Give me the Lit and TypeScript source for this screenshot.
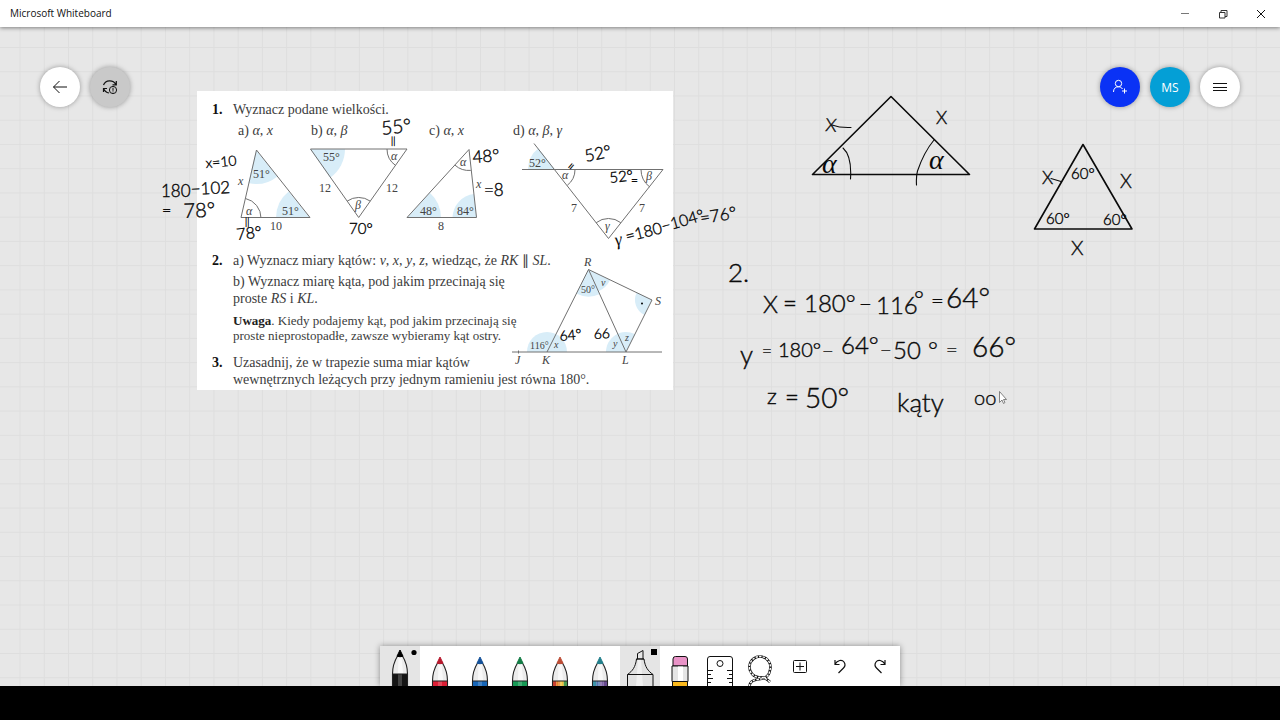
import { LitElement, html, svg, css } from "lit";
import { customElement, property } from "lit/decorators.js";

/** Path of a pie slice (or of its arc alone); angles in degrees, clockwise from +x. */
function slice(cx: number, cy: number, r: number, from: number, to: number, arcOnly = false): string {
  const p = (a: number) => {
    const t = (a * Math.PI) / 180;
    return `${(cx + r * Math.cos(t)).toFixed(1)} ${(cy + r * Math.sin(t)).toFixed(1)}`;
  };
  const arc = `A${r} ${r} 0 0 1 ${p(to)}`;
  return arcOnly ? `M${p(from)}${arc}` : `M${cx} ${cy}L${p(from)}${arc}Z`;
}

type Label = [x: number, y: number, text: string, italic?: boolean];

const figureOneLabels: Label[] = [
  [238, 185, "x", true], [253, 178, "51°"], [246, 215, "α", true], [282, 215, "51°"], [270, 230, "10"],
  [323, 161, "55°"], [391, 160, "α", true], [319, 192, "12"], [386, 192, "12"], [355, 209, "β", true],
  [460, 166, "α", true], [420, 215, "48°"], [457, 215, "84°"], [438, 230, "8"], [476, 188, "x", true],
  [529, 167, "52°"], [562, 179, "α", true], [646, 180, "β", true], [571, 212, "7"], [639, 212, "7"], [605, 230, "γ", true],
];

const figureTwoLabels: Label[] = [
  [584, 266, "R", true], [655, 305, "S", true], [515, 364, "J", true], [542, 364, "K", true], [622, 364, "L", true],
];
const figureTwoAngles: Label[] = [
  [530, 349, "116°"], [554, 348, "x", true], [613, 347, "y", true], [625, 341, "z", true], [581, 293, "50°"], [601, 286, "v", true],
];

const labels = (list: Label[]) =>
  list.map(([x, y, text, italic]) => svg`<text class=${italic ? "math" : "num"} x=${x} y=${y}>${text}</text>`);

@customElement("wb-worksheet")
export class Worksheet extends LitElement {
  static styles = css`
    :host { display: block; box-sizing: border-box; width: 476px; padding: 10px 0 2px; background: #fff; color: #3c3c3c;
      font: 14px/18px "Liberation Serif", serif; white-space: nowrap; }
    ol, p { margin: 0; padding: 0; }
    ol { list-style: none; }
    .task { display: grid; grid-template-columns: 21px 1fr; padding-left: 15px; }
    .no { grid-column: 1; font-weight: bold; color: #111; }
    .parts { display: grid; grid-template-columns: 73px 118px 84px 1fr; padding: 3px 0 0 5px; }
    .first svg { grid-column: 1 / -1; margin-left: -15px; }
    .second { margin-top: 6px; }
    .second > * { grid-row: 1; }
    .second svg { grid-column: 1 / -1; justify-self: end; }
    .text { grid-column: 2; }
    .para { margin-top: 3px; line-height: 17px; }
    .note { margin-top: 6px; font-size: 13px; line-height: 15px; }
    .note b { color: #222; }
    .third { margin-top: 11px; line-height: 17px; }
    svg { display: block; overflow: visible; font-family: "Liberation Serif", serif; font-size: 12px; }
    text { fill: #444; }
    .math { font-style: italic; }
    .small { font-size: 10px; }
    .fill { fill: #d8edf8; stroke: none; }
    .line { fill: none; stroke: #707070; stroke-width: 1; }
  `;

  render() {
    return html`
      <ol>
        <li class="task first">
          <span class="no">1.</span>
          <div>
            <p>Wyznacz podane wielkości.</p>
            <div class="parts">
              <span>a) <i>α</i>, <i>x</i></span><span>b) <i>α</i>, <i>β</i></span>
              <span>c) <i>α</i>, <i>x</i></span><span>d) <i>α</i>, <i>β</i>, <i>γ</i></span>
            </div>
          </div>
          <svg width="476" height="106" viewBox="197 140 476 106" role="img" aria-label="Trójkąty a, b, c, d">
            <path class="fill" d=${slice(256, 150, 34, 51, 103)} />
            <path class="fill" d=${slice(310, 218, 34, 180, 231)} />
            <path class="fill" d=${slice(310, 149, 35, 0, 55)} />
            <path class="fill" d=${slice(407, 218, 34, 312, 360)} />
            <path class="fill" d=${slice(476.5, 218, 24, 180, 264)} />
            <path class="fill" d=${slice(555, 169.5, 27, 180, 232)} />
            <path class="line" d="M256.5 150L241 217.5H310ZM310.500 149H407L358.700 217.500ZM469 149.500L407 217.500H476.500ZM534 143.500L608.500 238.500L663 169.500H522" />
            <path class="line" d=${slice(241, 218, 20, 283, 360, true)} />
            <path class="line" d=${slice(407, 149, 20, 125, 180, true)} />
            <path class="line" d=${slice(358.7, 217.5, 20, 235, 305, true)} />
            <path class="line" d=${slice(469, 149.5, 21, 85, 132, true)} />
            <path class="line" d=${slice(555, 169.5, 20, 0, 52, true)} />
            <path class="line" d=${slice(663, 169.5, 22, 128, 180, true)} />
            <path class="line" d=${slice(608.5, 238.5, 20, 232, 308, true)} />
            ${labels(figureOneLabels)}
          </svg>
        </li>
        <li class="task second">
          <span class="no">2.</span>
          <div class="text">
            <p>a) Wyznacz miary kątów: <i>v</i>, <i>x</i>, <i>y</i>, <i>z</i>, wiedząc, że <i>RK</i> ∥ <i>SL</i>.</p>
            <p class="para">b) Wyznacz miarę kąta, pod jakim przecinają się<br />proste <i>RS</i> i <i>KL</i>.</p>
            <p class="note"><b>Uwaga</b>. Kiedy podajemy kąt, pod jakim przecinają się<br />proste nieprostopadłe, zawsze wybieramy kąt ostry.</p>
          </div>
          <svg width="166" height="91" viewBox="507 252 166 91" role="img" aria-label="Czworokąt KLSR">
            <path class="fill" d=${slice(547, 352, 20, 180, 360)} />
            <path class="fill" d=${slice(626, 352, 20, 180, 297)} />
            <path class="fill" d=${slice(588.5, 269.5, 27, 65, 117)} />
            <path class="fill" d=${slice(588.5, 269.5, 24, 26, 65)} />
            <path class="fill" d=${slice(652, 300, 17, 117, 206)} />
            <path class="line" d="M512 352H662M547 352L588.500 269.500L652 300L626 352L588.500 269.500M518.500 350.500V353.500" />
            <circle cx="642" cy="303.500" r="1" />
            ${labels(figureTwoLabels)}
            <g class="small">${labels(figureTwoAngles)}</g>
          </svg>
        </li>
        <li class="task third">
          <span class="no">3.</span>
          <p>Uzasadnij, że w trapezie suma miar kątów<br />wewnętrznych leżących przy jednym ramieniu jest równa 180°.</p>
        </li>
      </ol>
    `;
  }
}

type Note = [x: number, y: number, size: number, text: string, turn?: number];

/** Handwritten notes: baseline start, size, text, rotation in degrees. */
const notes: Note[] = [
  [206, 168, 14, "x=10", -5], [161, 197, 17, "180"], [191, 195, 17, "−102", -3], [162, 216, 16, "="], [184, 218, 20, "78°", -3],
  [245, 225, 9, "||"], [237, 240, 16, "78°", -6], [382, 135, 19, "55°", -6], [391, 144, 9, "||"],
  [349, 234, 15, "70°"], [473, 163, 17, "48°", -4], [484, 196, 17, "=8"],
  [572, 172, 13, "=", -50], [586, 162, 17, "52°", -12], [610, 183, 15, "52°", -6], [631, 185, 12, "="],
  [616, 246, 18, "γ", -12], [627, 242, 16, "=180", -14], [663, 232, 16, "−104°", -16], [701, 224, 17, "=76°", -9],
  [560, 341, 14, "64°", -6], [594, 339, 14, "66", -3],
  [728, 282, 26, "2."],
  [763, 313, 24, "X"], [783, 312, 24, "="], [804, 312, 24, "180°"], [859, 312, 22, "−"], [876, 314, 24, "116"],
  [914, 308, 24, "°"], [931, 308, 22, "="], [946, 308, 28, "64°"],
  [740, 364, 26, "y"], [762, 357, 17, "="], [778, 357, 20, "180°"], [822, 358, 20, "−"], [841, 354, 24, "64°"],
  [880, 357, 20, "−"], [893, 359, 24, "50"], [928, 359, 24, "°"], [946, 357, 20, "="], [972, 357, 28, "66°"],
  [767, 404, 22, "z"], [785, 406, 24, "="], [805, 408, 28, "50°"], [897, 412, 26, "kąty"], [974, 405, 20, "oo"],
  [822, 173, 28, "α"], [929, 169, 28, "α"], [825, 131, 18, "X", 4], [936, 124, 18, "X"],
  [1042, 184, 18, "X"], [1120, 188, 19, "X"], [1071, 255, 20, "X"],
  [1071, 179, 15, "60°"], [1046, 224, 15, "60°"], [1103, 225, 15, "60°"],
];

@customElement("wb-ink")
export class Ink extends LitElement {
  static styles = css`
    :host { display: block; pointer-events: none; }
    svg { display: block; width: 100%; height: 100%; font-family: Lato, sans-serif; font-weight: 300; }
    .note { fill: #0a0a0a; stroke: #0a0a0a; stroke-width: 0.4; }
    .greek { font-family: "Liberation Serif", serif; font-style: italic; font-weight: 400; stroke: none; }
    .stroke { fill: none; stroke: #0a0a0a; stroke-width: 1.6; stroke-linecap: round; stroke-linejoin: round; }
    .thin { stroke-width: 1.1; }
    .cursor { fill: #fff; stroke: #666; stroke-width: 0.8; }
  `;

  render() {
    return html`
      <svg aria-label="Notatki odręczne">
        <g transform="translate(0 -27)">
          ${notes.map(([x, y, size, text, turn = 0]) =>
            svg`<text class=${/[αγ]/.test(text) ? "note greek" : "note"} font-size=${size} transform="translate(${x} ${y}) rotate(${turn})">${text}</text>`)}
          <path class="stroke" d="M891 96.500L812.500 174.500H969.500ZM1083 144.500L1034.500 229H1132Z" />
          <path class="stroke thin" d="M843 148Q852 156 850.500 179M934 140Q924 152 917.500 171Q916 176 916.500 185M832 125Q840 128 851 127.500M1051 178.500L1061 181.500" />
          <path class="cursor" d="M999.500 391.500V402.500L1002 400L1003.500 403.500L1005 402.500L1003.500 399.500H1006.500Z" />
        </g>
      </svg>
    `;
  }
}

@customElement("wb-pen")
export class Pen extends LitElement {
  @property() tip = "#000";
  @property({ attribute: false }) bands: string[] = [];
  @property({ type: Boolean }) raised = false;

  static styles = css`
    :host { display: block; }
    svg { display: block; }
    .body { fill: #ececec; stroke: #222; stroke-width: 1.1; }
    .shine { fill: #fff; opacity: 0.7; }
    .edge { fill: none; stroke: #222; stroke-width: 1; }
    .gloss { fill: #fff; opacity: 0.2; }
  `;

  render() {
    const w = 15 / this.bands.length;
    return html`
      <svg width="40" height="40" viewBox="0 0 40 40" aria-hidden="true">
        <g transform="translate(0 ${this.raised ? 0 : 7})">
          <path class="body" d="M17.500 10C14.500 15 12.500 21 12.500 28V40H27.500V28C27.500 21 25.500 15 22.500 10Z" />
          <path class="shine" d="M18.500 11H21.500L23 27H18Z" />
          ${this.bands.map((c, i) => svg`<rect x=${12.5 + i * w} y="28" width=${w} height="14" fill=${c} />`)}
          <rect class="gloss" x="18" y="28" width="4" height="14" />
          <path class="edge" d="M12.500 40V28H27.500V40" />
          <path d="M20 4L17 10.200Q20 11.300 23 10.200Z" fill=${this.tip} stroke=${this.tip} stroke-width="1" />
          ${this.raised ? svg`<circle cx="34" cy="6.500" r="2.600" />` : null}
        </g>
      </svg>
    `;
  }
}

const pens = [
  { name: "Czarne pióro", tip: "#000", bands: ["#151515"], raised: true },
  { name: "Czerwone pióro", tip: "#b81a2e", bands: ["#dc1f35"], raised: false },
  { name: "Niebieskie pióro", tip: "#15529a", bands: ["#1766b8"], raised: false },
  { name: "Zielone pióro", tip: "#147d46", bands: ["#179a55"], raised: false },
  { name: "Pióro tęczowe", tip: "#bd4d36", bands: ["#c9402f", "#e8862b", "#f0c23c", "#4a9a50"], raised: false },
  { name: "Pióro galaktyka", tip: "#23808c", bands: ["#3b93a8", "#5577b0", "#8065a8", "#6a4b90"], raised: false },
];

@customElement("app-root")
export class AppRoot extends LitElement {
  static styles = css`
    :host { display: flex; flex-direction: column; height: 100vh; overflow: hidden; color: #111; font-family: "Open Sans", sans-serif; }
    button { display: grid; place-items: center; margin: 0; padding: 0; border: 0; background: none; color: inherit; font: inherit; }
    svg { display: block; }
    .icon { fill: none; stroke: currentColor; stroke-width: 1; }
    .titlebar { position: relative; z-index: 2; display: flex; justify-content: space-between; height: 27px; padding-left: 10px;
      background: #fff; box-shadow: 0 1px 4px rgba(0, 0, 0, 0.45); }
    .title { margin: 0; font-size: 10px; font-weight: 400; line-height: 27px; }
    .window { display: flex; }
    .window button { width: 38px; }
    .board { position: relative; display: flex; flex: 1; flex-direction: column; justify-content: space-between; background: #e7e7e7; }
    .grid { position: absolute; inset: 0; width: 100%; height: 100%; }
    .sheet { position: absolute; top: 64px; left: 197px; }
    .ink { position: absolute; inset: 0; }
    .actions { position: relative; display: flex; justify-content: space-between; padding: 40px 40px 0; }
    .group { display: flex; gap: 10px; }
    .round { width: 40px; height: 40px; border-radius: 50%; background: #fff; box-shadow: 0 0 5px rgba(0, 0, 0, 0.35); font-size: 12px; }
    .sync { background: #c9c9c9; }
    .invite { background: #0a32f5; color: #fff; }
    .user { background: #049fd6; color: #fff; }
    .tools { position: relative; display: flex; align-self: center; background: #fff; box-shadow: 0 0 6px rgba(0, 0, 0, 0.4); }
    .tools button { width: 40px; height: 40px; }
    .tools .on { background: #e5e5e5; }
    .bottom { position: relative; z-index: 2; height: 34px; background: #000; }
  `;

  render() {
    return html`
      <header class="titlebar">
        <h1 class="title">Microsoft Whiteboard</h1>
        <div class="window">
          <button aria-label="Minimalizuj"><svg class="icon" width="10" height="10"><path d="M1 4.500H9" stroke="#777" /></svg></button>
          <button aria-label="Przywróć"><svg class="icon" width="10" height="10"><path stroke="#333" d="M1.500 3.500H7V9H1.500ZM3 3.500V1.500H9V7.500H7" /></svg></button>
          <button aria-label="Zamknij"><svg class="icon" width="10" height="10"><path d="M1 1L9 9M9 1L1 9" /></svg></button>
        </div>
      </header>
      <main class="board">
        <svg class="grid" aria-hidden="true">
          <defs>
            <pattern id="cells" x="19.500" y="20" width="24.240" height="24.240" patternUnits="userSpaceOnUse">
              <path d="M.5 0V24.240M0 .5H24.240" fill="none" stroke="#dedede" />
            </pattern>
          </defs>
          <rect width="100%" height="100%" fill="url(#cells)" />
        </svg>
        <wb-worksheet class="sheet"></wb-worksheet>
        <wb-ink class="ink"></wb-ink>
        <div class="actions">
          <div class="group">
            <button class="round" aria-label="Wstecz"><svg class="icon" width="16" height="16"><path d="M15 8H1.500M7.500 2L1.500 8L7.500 14" /></svg></button>
            <button class="round sync" aria-label="Synchronizacja">
              <svg class="icon" width="16" height="16">
                <path stroke-width="1.200" d="M1.500 6C3.500 .8 11 .3 14 5.500M14.300 2V5.800H10.500M1.500 13V9.500H5M1.500 9.500C2.500 12 4 13.500 7 14" />
                <circle cx="11" cy="11" r="3.600" /><path d="M11 8.800V11.800M11 12.500V13.300" />
              </svg>
            </button>
          </div>
          <div class="group">
            <button class="round invite" aria-label="Zaproś">
              <svg class="icon" width="16" height="16"><circle cx="6.500" cy="4.500" r="3.200" /><path d="M1.500 13C1.500 9.500 3.500 7.800 6.500 7.800C8.500 7.800 9.500 8.500 10.500 10M12.500 9.500V14.500M10 12H15" /></svg>
            </button>
            <button class="round user">MS</button>
            <button class="round" aria-label="Menu"><svg class="icon" width="14" height="12"><path d="M0 2.500H14M0 6.500H14M0 9.500H14" /></svg></button>
          </div>
        </div>
        <nav class="tools">
          ${pens.map((p) => html`
            <button class=${p.raised ? "on" : ""} aria-label=${p.name}>
              <wb-pen .tip=${p.tip} .bands=${p.bands} .raised=${p.raised}></wb-pen>
            </button>`)}
          <button class="on" aria-label="Zakreślacz">
            <svg class="icon" width="40" height="40">
              <path fill="#e2e2e2" d="M16.500 13C15.500 21 12.500 25 7.500 28.500V41H33V28.500C28 25 25 21 24 13Z" />
              <path d="M18 13.500H21L23 40H16Z" fill="#fff" stroke="none" opacity=".5" />
              <path d="M7.500 28.500H33M16.500 13H24M17.500 13V7.500L23 4.500V13" />
              <rect x="31" y="3" width="6" height="6" fill="#000" stroke="none" />
            </svg>
          </button>
          <button aria-label="Gumka">
            <svg class="icon" width="40" height="40">
              <path fill="#e993c7" d="M13 20V13Q13 10.500 15.500 10.500H25Q27.500 10.500 27.500 13V20Z" />
              <path fill="#e5e5e5" d="M12 20H28V35.500H12Z" /><path fill="#fff" stroke="none" d="M18 20.500H23V35H18Z" />
              <path fill="#fbb91c" d="M12.500 35.500H27.500V42H12.500Z" />
            </svg>
          </button>
          <button aria-label="Linijka">
            <svg class="icon" width="40" height="40">
              <path d="M7.500 40V13Q7.500 10.500 10 10.500H30Q32.500 10.500 32.500 13V40" /><circle cx="20" cy="17.500" r="3" />
              <path d="M8 24.500H13M8 28.500H11M8 32.500H13M8 36.500H11M32 24.500H27M32 28.500H29M32 32.500H27M32 36.500H29" />
            </svg>
          </button>
          <button aria-label="Lasso">
            <svg class="icon" width="40" height="40">
              <path stroke-width="2.600" d="M30 36Q24 30.500 20 31.500A10.500 10.500 0 1 1 30 24C29 32 22 33 17 33.500Q10 34.500 9.500 40" />
              <path stroke="#fff" stroke-width="1.400" stroke-dasharray="2.400 1.200" d="M30 36Q24 30.500 20 31.500A10.500 10.500 0 1 1 30 24C29 32 22 33 17 33.500Q10 34.500 9.500 40" />
            </svg>
          </button>
          <button aria-label="Wstaw"><svg class="icon" width="40" height="40"><rect x="13.500" y="14.500" width="13" height="12" rx="1" /><path d="M20 16.500V24.500M16 20.500H24" /></svg></button>
          <button aria-label="Cofnij"><svg class="icon" width="40" height="40"><path stroke-width="1.200" d="M15 14V18.500H19.500M15 18.300C17.500 14 22 13.300 24 16C25.600 18.300 25 20.500 23.500 22L18.500 27" /></svg></button>
          <button aria-label="Ponów"><svg class="icon" width="40" height="40"><path stroke-width="1.200" d="M25 14V18.500H20.500M25 18.300C22.500 14 18 13.300 16 16C14.400 18.300 15 20.500 16.500 22L21.500 27" /></svg></button>
        </nav>
      </main>
      <footer class="bottom"></footer>
    `;
  }
}
